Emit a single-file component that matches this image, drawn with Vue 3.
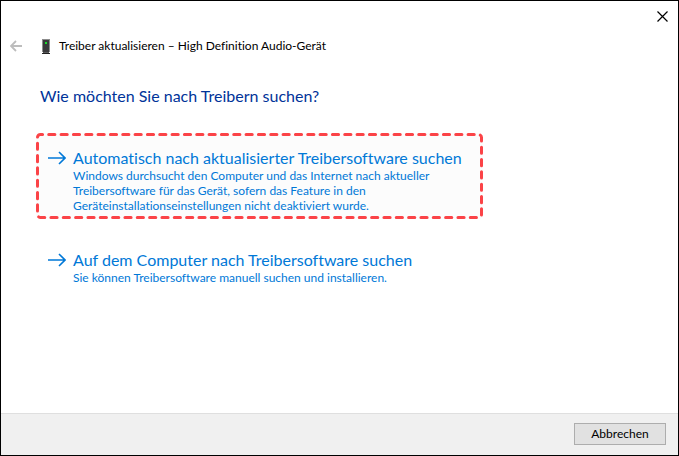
<template>
    <main class="wizard">
        <div class="caption">
            <button class="icon-button close" type="button" aria-label="Schließen">
                <svg width="11" height="11" viewBox="0 0 11 11" aria-hidden="true">
                    <path d="M.5 .5l10 10M10.5 .5l-10 10" fill="none" stroke="#000" stroke-width="1.2" />
                </svg>
            </button>
        </div>

        <header class="title-row">
            <button class="icon-button back" type="button" aria-label="Zurück" disabled>
                <svg width="12" height="12" viewBox="0 0 12 12" aria-hidden="true">
                    <path d="M12 6H1.2M6 1L1 6l5 5" fill="none" stroke="#bdbdbd" stroke-width="1.8" />
                </svg>
            </button>
            <svg class="device" width="8" height="15" viewBox="0 0 8 15" aria-hidden="true">
                <path d="M0 0h8v13H0z" fill="#8c8c8c" />
                <path d="M1 1h6v12H1z" fill="#3a3a3c" />
                <path d="M3 3h2v2H3z" fill="#16e02b" />
                <path d="M1 13h6v1H1z" fill="#5a5a5a" />
                <path d="M0 14h8v1H0z" fill="#222" />
            </svg>
            <span class="title">{{ title }}</span>
        </header>

        <section class="content">
            <h1>Wie möchten Sie nach Treibern suchen?</h1>

            <button
                v-for="option in options"
                :key="option.id"
                :class="['option', { marked: option.id === marked }]"
                type="button"
                @click="marked = option.id"
            >
                <svg v-if="option.id === marked" class="outline" aria-hidden="true">
                    <rect class="dashes" x="1.5" y="1.5" rx="3" pathLength="1020" />
                </svg>
                <svg class="arrow" width="18" height="14" viewBox="0 0 18 14" aria-hidden="true">
                    <path d="M0 7h17M11 1l6 6-6 6" fill="none" stroke="currentColor" stroke-width="1.6" />
                </svg>
                <span class="option-text">
                    <span class="option-title">{{ option.title }}</span>
                    <span class="option-note">{{ option.note }}</span>
                </span>
            </button>
        </section>

        <footer class="footer">
            <button class="cancel" type="button">Abbrechen</button>
        </footer>
    </main>
</template>

<script setup>
import { ref } from 'vue';

const title = 'Treiber aktualisieren – High Definition Audio-Gerät';

// Варианты поиска драйвера
const options = [
    {
        id: 'auto',
        title: 'Automatisch nach aktualisierter Treibersoftware suchen',
        note: 'Windows durchsucht den Computer und das Internet nach aktueller\nTreibersoftware für das Gerät, sofern das Feature in den\nGeräteinstallationseinstellungen nicht deaktiviert wurde.',
    },
    {
        id: 'manual',
        title: 'Auf dem Computer nach Treibersoftware suchen',
        note: 'Sie können Treibersoftware manuell suchen und installieren.',
    },
];

// Выделенный вариант
const marked = ref('auto');
</script>

<style>
body {
    margin: 0;
}
</style>

<style scoped>
.wizard {
    display: flex;
    flex-direction: column;
    box-sizing: border-box;
    min-height: 100vh;
    border: 1px solid #000;
    background: #fff;
    color: #000;
    font-family: "Segoe UI", Lato, "Open Sans", sans-serif;
    font-size: 12px;
    line-height: 16px;
    font-variant-ligatures: none;
}

button {
    font: inherit;
}

.caption {
    display: flex;
    justify-content: flex-end;
    padding: 7px 8px 0 0;
}

.icon-button {
    display: flex;
    align-items: center;
    justify-content: center;
    padding: 0;
    border: none;
    background: none;
}

.close {
    width: 16px;
    height: 16px;
}

.title-row {
    display: flex;
    align-items: center;
    margin-top: 14px;
    padding-left: 8px;
}

.back {
    width: 14px;
    height: 16px;
}

.device {
    margin: 0 9px 0 19px;
}

.content {
    flex: 1;
    padding: 30px 35px 20px;
}

h1 {
    margin: 0 0 25px 4px;
    color: #003399;
    font-size: 16px;
    font-weight: normal;
    line-height: 24px;
}

.option {
    display: flex;
    position: relative;
    box-sizing: border-box;
    width: 447px;
    max-width: 100%;
    margin-bottom: 16px;
    padding: 14px 12px 6px;
    border: none;
    border-radius: 4px;
    background: none;
    color: #0078d7;
    text-align: left;
    cursor: pointer;
}

.marked {
    background: #fcfcfc;
}

.outline {
    position: absolute;
    inset: 0;
    width: 100%;
    height: 100%;
    pointer-events: none;
}

.dashes {
    width: calc(100% - 3px);
    height: calc(100% - 3px);
    fill: none;
    stroke: #fb4347;
    stroke-width: 3;
    stroke-linecap: round;
    stroke-dasharray: 6 6;
    stroke-dashoffset: 4;
}

.arrow {
    flex: none;
    margin: 4px 7px 0 0;
}

.option-title {
    display: block;
    font-size: 16px;
    line-height: 21px;
}

.option-note {
    display: block;
    line-height: 15px;
    white-space: pre-line;
}

.footer {
    display: flex;
    justify-content: flex-end;
    padding: 9px 12px 10px;
    border-top: 1px solid #dfdfdf;
    background: #f0f0f0;
}

.cancel {
    width: 92px;
    height: 22px;
    padding: 0;
    border: 1px solid #adadad;
    background: #e1e1e1;
    line-height: 20px;
}
</style>
